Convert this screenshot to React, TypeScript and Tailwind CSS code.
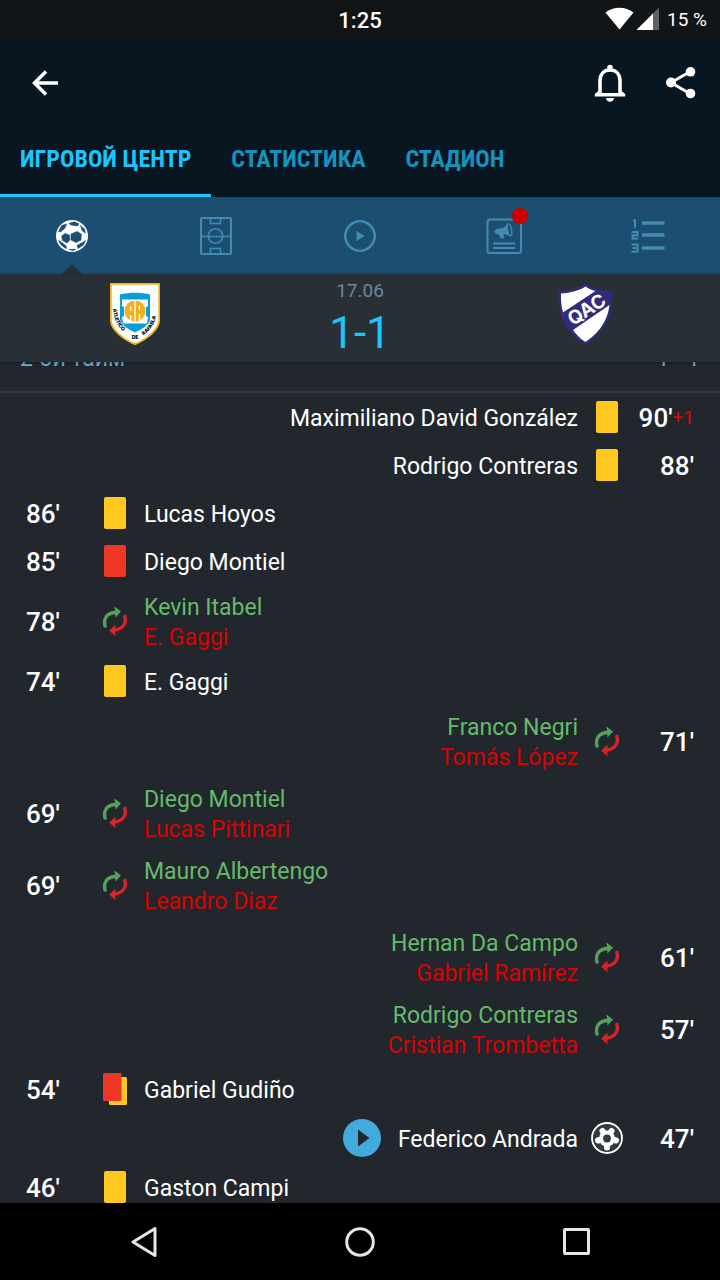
import React from 'react';

type EventKind = 'yellow' | 'red' | 'secondYellow' | 'sub' | 'goal';

interface MatchEvent {
    minute: number;
    extra?: string;
    side: 'home' | 'away';
    kind: EventKind;
    player: string;
    playerOut?: string;
}

const events: MatchEvent[] = [
    { minute: 90, extra: '+1', side: 'away', kind: 'yellow', player: 'Maximiliano David González' },
    { minute: 88, side: 'away', kind: 'yellow', player: 'Rodrigo Contreras' },
    { minute: 86, side: 'home', kind: 'yellow', player: 'Lucas Hoyos' },
    { minute: 85, side: 'home', kind: 'red', player: 'Diego Montiel' },
    { minute: 78, side: 'home', kind: 'sub', player: 'Kevin Itabel', playerOut: 'E. Gaggi' },
    { minute: 74, side: 'home', kind: 'yellow', player: 'E. Gaggi' },
    { minute: 71, side: 'away', kind: 'sub', player: 'Franco Negri', playerOut: 'Tomás López' },
    { minute: 69, side: 'home', kind: 'sub', player: 'Diego Montiel', playerOut: 'Lucas Pittinari' },
    { minute: 69, side: 'home', kind: 'sub', player: 'Mauro Albertengo', playerOut: 'Leandro Diaz' },
    { minute: 61, side: 'away', kind: 'sub', player: 'Hernan Da Campo', playerOut: 'Gabriel Ramírez' },
    { minute: 57, side: 'away', kind: 'sub', player: 'Rodrigo Contreras', playerOut: 'Cristian Trombetta' },
    { minute: 54, side: 'home', kind: 'secondYellow', player: 'Gabriel Gudiño' },
    { minute: 47, side: 'away', kind: 'goal', player: 'Federico Andrada' },
    { minute: 46, side: 'home', kind: 'yellow', player: 'Gaston Campi' },
];

const tabs = ['ИГРОВОЙ ЦЕНТР', 'СТАТИСТИКА', 'СТАДИОН'];

const BallIcon = () => (
    <svg width="32" height="32" viewBox="0 0 32 32" aria-hidden="true">
        <circle cx="16" cy="16" r="16" fill="#fff" />
        <g fill="#1c4e72" stroke="#1c4e72" strokeWidth=".6" strokeLinejoin="round">
            <path d="M15 14l6-2.500 4.300 2.500-.3 6-5 2.500-5-2.500z" />
            <path d="M5.500 16L9 13.500l4.300 1.500.7 5-3 3-4.500-2.500z" />
            <path d="M2.500 12L5.500 5.500 10.500 4 9 8l-4 3.500z" />
            <path d="M13 3.500L18 1.800l5 2L21.500 6 15 5z" />
            <path d="M24.500 5.500l4 3.500.8 4-3.300-2.500z" />
            <path d="M26.500 22.500l3-2-2 4.500-5.500 3.500-1-3z" />
            <path d="M2.500 20.500l3.500 2 4.500 4-.5 2.200-5-3.700z" />
            <path d="M13 29.500l6.500-.3-2.500 1.500z" />
        </g>
    </svg>
);

const PitchIcon = () => (
    <svg width="32" height="38" viewBox="0 0 32 38" fill="none" stroke="#438bb3" strokeWidth="1.6" aria-hidden="true">
        <rect x="1" y="1" width="30" height="36" rx="1" strokeWidth="2" />
        <path d="M1 19.500h30M10.500 2v4.500h10V2M10.500 36v-4.500h10V36" />
        <circle cx="15.500" cy="19" r="7.200" />
    </svg>
);

const PlayRingIcon = () => (
    <svg width="32" height="32" viewBox="0 0 32 32" aria-hidden="true">
        <circle cx="16" cy="16" r="14.700" fill="none" stroke="#438bb3" strokeWidth="2.600" />
        <path d="M12.500 11l8 5-8 5z" fill="#438bb3" />
    </svg>
);

const NewsIcon = () => (
    <svg width="36" height="36" viewBox="0 0 36 36" fill="none" stroke="#438bb3" aria-hidden="true">
        <rect x="1.500" y="1.500" width="33.500" height="33.500" rx="2.500" strokeWidth="2" />
        <path d="M7 25.500h22M7 30h22" strokeWidth="2" />
        <path d="M9 13.500c0-1.500 2-2.500 4.500-2.500 3.500 0 6-2 8-5l2.500 12c-2-1.500-4.500-2.200-7-2.200l.8 4.200h-3l-1.400-4C10.500 16 9 15 9 13.500z" fill="#438bb3" />
        <ellipse cx="23.500" cy="11.800" rx="2" ry="6" strokeWidth="1.400" transform="rotate(-10 23.500 11.800)" fill="#1c4e72" />
    </svg>
);

const StandingsIcon = () => (
    <svg width="34" height="34" viewBox="0 0 34 34" fill="none" stroke="#438bb3" aria-hidden="true">
        <path d="M11 4h22.500M11 16h22.500M11 29h22.500" strokeWidth="3.400" />
        <path d="M2 1.500h2V9M.5 13h6v3.200h-5v3.300H7M.5 25.500h6v7.200h-6M1.500 29h5" strokeWidth="2" />
    </svg>
);

const HomeCrest = () => (
    <svg width="50" height="62" viewBox="0 0 50 62" role="img" aria-label="Atlético de Rafaela">
        <path d="M.8.800h48.400v36C49.200 47 36 56.500 25 61.200 14 56.500.8 47 .8 36.800z" fill="#fff" stroke="#eeb11f" strokeWidth="1.800" />
        <path d="M10 11.500c8-2.500 22-2.500 30 0V36c0 6-9 10.500-15 13.500C19 46.500 10 42 10 36z" fill="#0a9ddb" />
        <path d="M12 16.500h26v7h-2v10h2l-1 7H13l-1-7h2v-10h-2z" fill="#fff" />
        <circle cx="25" cy="28" r="10.500" fill="#eeb11f" />
        <path
            d="M25 17v22M20.700 23.500V28M20.700 32v7M29.500 22.500V27M29.500 31v8"
            fill="none"
            stroke="#fff"
            strokeWidth="1.300"
        />
        <path id="crest-left" d="M3 25.500C4 39 9 46 19 53" fill="none" />
        <path id="crest-right" d="M33.500 52.500C42 46 46 39 47.500 24" fill="none" />
        <g fill="#111" fontFamily="Inter, sans-serif" fontSize="5" fontWeight="900">
            <text><textPath href="#crest-left">ATLETICO</textPath></text>
            <text><textPath href="#crest-right">RAFAELA</textPath></text>
            <text x="25" y="56" textAnchor="middle">DE</text>
        </g>
    </svg>
);

const AwayCrest = () => (
    <svg width="55" height="62" viewBox="0 0 55 62" role="img" aria-label="Quilmes">
        <path d="M27.500 0C31 4 42 8 54.500 8c.5 18-2 38-27 53.500C2.500 46 0 26 .5 8 13 8 24 4 27.500 0z" fill="#322b7c" />
        <path d="M27.500 3.500c3 2 6 3.500 10 4.500L5 29.500C3.200 23 2.800 16 3 10.500c10-.5 18.500-3 24.500-7zM51.500 22c-1.500 13-8 26-24 37-5-3-9.500-7.500-12.500-12z" fill="#fff" />
        <text
            x="29"
            y="33"
            fill="#fff"
            fontFamily="Inter, sans-serif"
            fontSize="19"
            fontWeight="700"
            textAnchor="middle"
            transform="rotate(-33 29 27)"
        >
            QAC
        </text>
    </svg>
);

const SubIcon = () => (
    <svg width="26" height="32" viewBox="0 0 26 32" fill="none" strokeWidth="3.400" aria-hidden="true">
        <path d="M3.500 22.500C.5 14 5 7.500 14 7.500" stroke="#55a05b" />
        <path d="M12.500 1.500l6.500 5-5.500 6z" fill="#55a05b" />
        <path d="M22.300 10c3.200 7-1 14.500-9.800 15" stroke="#d8232a" />
        <path d="M13.500 19.500v11.500L7 25.800z" fill="#d8232a" />
    </svg>
);

const GoalIcon = () => (
    <svg width="32" height="32" viewBox="0 0 32 32" aria-hidden="true">
        <circle cx="16" cy="16" r="15" fill="#2f3b43" stroke="#fff" strokeWidth="1.800" />
        <circle cx="16" cy="16.500" r="8" fill="#fff" />
        <path
            d="M16 16l-4.500-7M16 16l4.500-7M16 16L7 18.500M16 16l9 2.500M16 16v9.500"
            fill="none"
            stroke="#fff"
            strokeWidth="6"
            strokeLinecap="round"
        />
        <circle cx="16" cy="16.500" r="3.900" fill="#2f3b43" />
    </svg>
);

const Card = ({ color }: { color: string }) => <span className={`block h-8 w-[22px] rounded-xs ${color}`} />;

const EventIcon = ({ kind }: { kind: EventKind }) => {
    switch (kind) {
        case 'yellow':
            return <Card color="bg-[#ffc81e]" />;
        case 'red':
            return <Card color="bg-[#ee3724]" />;
        case 'secondYellow':
            return (
                <svg width="24" height="32" viewBox="0 0 24 32" aria-hidden="true">
                    <rect x="6" y="4" width="18" height="28" rx="1.500" fill="#ffc81e" />
                    <rect width="18.500" height="28" rx="1.500" fill="#ee3724" />
                </svg>
            );
        case 'goal':
            return <GoalIcon />;
        default:
            return <SubIcon />;
    }
};

const rowHeight = (event: MatchEvent) => {
    if (event.playerOut) return 'h-18';
    return event.kind === 'goal' ? 'h-[50px]' : 'h-12';
};

const EventRow: React.FC<{ event: MatchEvent }> = ({ event }) => {
    const away = event.side === 'away';
    return (
        <li className={`flex items-center gap-[13px] px-[26px] ${away ? 'flex-row-reverse' : ''} ${rowHeight(event)}`}>
            <div className={`flex items-center ${away ? 'flex-row-reverse' : ''}`}>
                <span className={`flex items-center pt-0.5 text-[26px] font-medium ${away ? 'w-[71px] justify-end' : 'w-[73px]'}`}>
                    {event.minute}'
                    {event.extra && <span className="text-[19px] font-normal text-[#ee0000]">{event.extra}</span>}
                </span>
                <span className="flex w-8 justify-center">
                    <EventIcon kind={event.kind} />
                </span>
            </div>
            <div className={`pt-1 text-[23px] leading-[30px] ${away ? 'text-right' : ''}`}>
                {event.playerOut ? (
                    <>
                        <p className="text-[#66bb6a]">{event.player}</p>
                        <p className="text-[#dd0000]">{event.playerOut}</p>
                    </>
                ) : (
                    <p>{event.player}</p>
                )}
            </div>
            {event.kind === 'goal' && (
                <button aria-label="Смотреть гол" className="mr-1">
                    <svg width="38" height="38" viewBox="0 0 38 38" aria-hidden="true">
                        <circle cx="19" cy="19" r="19" fill="#41abdd" />
                        <path d="M15 10.500L26.500 19 15 27.500z" fill="#21272d" />
                    </svg>
                </button>
            )}
        </li>
    );
};

const App = () => (
    <div className="flex h-screen flex-col overflow-hidden bg-[#21272d] font-[Roboto,sans-serif] text-white">
        <div className="relative flex h-[38px] shrink-0 items-center justify-center bg-[#121518]">
            <span className="pt-0.5 text-[22px] font-medium">1:25</span>
            <div className="absolute right-[13px] flex items-center gap-2">
                <svg width="54" height="24" viewBox="0 0 54 24" aria-hidden="true">
                    <path d="M.5 5.500C8-.8 20.500-.8 28.500 5.500L14.500 22.500z" fill="#fff" />
                    <path d="M54 .5V23H31.500z" fill="#606163" />
                    <path d="M48 6.500V23H31.500z" fill="#fff" />
                </svg>
                <span className="pt-0.5 text-[19px]">15 %</span>
            </div>
        </div>

        <header className="shrink-0 bg-[#071620]">
            <div className="flex h-[90px] items-center justify-between pr-6 pl-8">
                <button aria-label="Назад">
                    <svg width="26" height="26" viewBox="0 0 26 26" fill="none" stroke="#fff" strokeWidth="3.500" aria-hidden="true">
                        <path d="M26 13H3M14 1.500L2.500 13 14 24.500" />
                    </svg>
                </button>
                <div className="flex items-center gap-10">
                    <button aria-label="Уведомления">
                        <svg width="32" height="38" viewBox="0 0 32 38" aria-hidden="true">
                            <path d="M6 30V17C6 10 10 6 16 6s10 4 10 11v13" fill="none" stroke="#fff" strokeWidth="3.600" />
                            <path d="M5 26.500L.8 30v2.500h30.400V30L27 26.500 25 29H7z" fill="#fff" />
                            <circle cx="16" cy="3.500" r="2.800" fill="#fff" />
                            <path d="M12 34h8c0 2-2 3.800-4 3.800S12 36 12 34z" fill="#fff" />
                        </svg>
                    </button>
                    <button aria-label="Поделиться">
                        <svg width="30" height="32" viewBox="0 0 30 32" fill="#fff" aria-hidden="true">
                            <path d="M24.500 4.500L5 15.500 24.500 27" fill="none" stroke="#fff" strokeWidth="3" />
                            <circle cx="24.500" cy="4.800" r="4.800" />
                            <circle cx="5" cy="15.500" r="5" />
                            <circle cx="24.500" cy="26.500" r="4.800" />
                        </svg>
                    </button>
                </div>
            </div>
            <nav className="flex font-['Roboto_Condensed','Liberation_Sans_Narrow',Roboto,sans-serif] text-[24px] font-bold">
                {tabs.map((tab, i) => (
                    <button
                        key={tab}
                        className={`flex h-[69px] items-center border-b-3 px-5 pb-1 ${i === 0 ? 'border-[#1bc6ff] text-[#1bc6ff]' : 'border-transparent text-[#1493bf]'}`}
                    >
                        {tab}
                    </button>
                ))}
            </nav>
        </header>

        <nav className="grid h-[77px] shrink-0 grid-cols-5 bg-[#1c4e72]">
            <button aria-label="События" className="relative flex items-center justify-center">
                <BallIcon />
                <svg className="absolute bottom-0" width="20" height="10" viewBox="0 0 20 10" aria-hidden="true">
                    <path d="M0 10L10 0l10 10z" fill="#282f35" />
                </svg>
            </button>
            <button aria-label="Составы" className="flex items-center justify-center"><PitchIcon /></button>
            <button aria-label="Видео" className="flex items-center justify-center"><PlayRingIcon /></button>
            <button aria-label="Новости" className="flex items-center justify-center">
                <span className="relative">
                    <NewsIcon />
                    <span className="absolute -top-2.5 -right-1.5 size-4 rounded-full bg-[#cc0000]" />
                </span>
            </button>
            <button aria-label="Таблица" className="flex items-center justify-center"><StandingsIcon /></button>
        </nav>

        <section className="relative z-10 grid h-[88px] shrink-0 grid-cols-3 bg-[#282f35] px-[22px] shadow-[0_1px_3px_rgba(0,0,0,0.4)]">
            <div className="flex justify-center pt-[9px]"><HomeCrest /></div>
            <div className="flex flex-col items-center pt-[5px]">
                <span className="text-[19px] leading-6 text-[#71879c]">17.06</span>
                <span className="pt-1 text-[44px] leading-[52px] text-[#1bc6ff]">1-1</span>
            </div>
            <div className="flex justify-center pt-[9px]"><AwayCrest /></div>
        </section>

        <main className="min-h-0 flex-1 overflow-hidden">
            {/* scrolled up, half hidden behind the score bar */}
            <div className="-mt-9 flex h-[67px] items-center justify-between border-b-2 border-[#2f373f] px-5 pt-0.5 text-[23px] text-[#6db3d9]">
                <span>2-ой тайм</span>
                <span>1 - 1</span>
            </div>
            <ul className="flex flex-col">
                {events.map((event) => (
                    <EventRow key={`${event.minute}-${event.player}`} event={event} />
                ))}
            </ul>
        </main>

        <footer className="grid h-[77px] shrink-0 grid-cols-3 items-center bg-black px-9">
            <button aria-label="Назад" className="flex justify-center">
                <svg width="26" height="30" viewBox="0 0 26 30" fill="none" stroke="#e6e6e6" strokeWidth="3" strokeLinejoin="round" aria-hidden="true">
                    <path d="M24 1.500v27L2 15z" />
                </svg>
            </button>
            <button aria-label="Домой" className="flex justify-center">
                <svg width="30" height="30" viewBox="0 0 30 30" fill="none" stroke="#e6e6e6" strokeWidth="3" aria-hidden="true">
                    <circle cx="15" cy="15" r="13.300" />
                </svg>
            </button>
            <button aria-label="Недавние" className="flex justify-center">
                <svg width="27" height="27" viewBox="0 0 27 27" fill="none" stroke="#e6e6e6" strokeWidth="3" aria-hidden="true">
                    <rect x="1.500" y="1.500" width="24" height="24" rx=".5" />
                </svg>
            </button>
        </footer>
    </div>
);

export default App;
